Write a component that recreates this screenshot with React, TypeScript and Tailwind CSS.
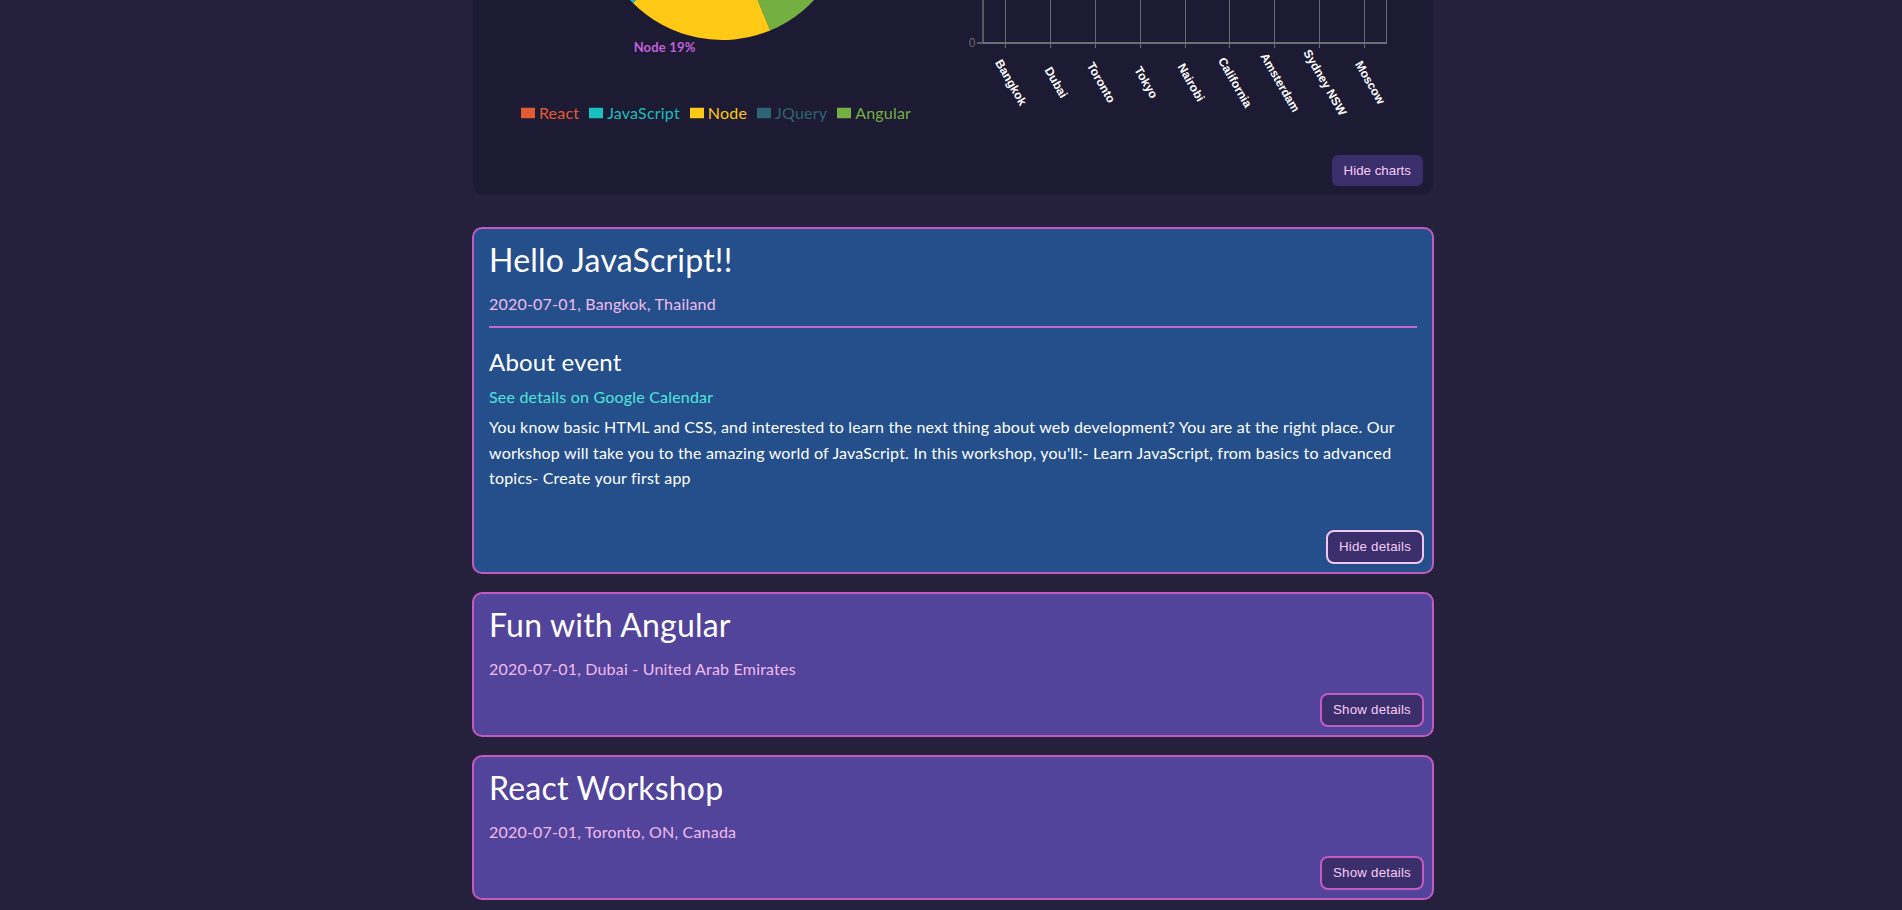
import React, { useState } from "react";

const font = { fontFamily: "Lato, 'Noto Sans', sans-serif", letterSpacing: "0.0125em" };
const btnFont = { fontFamily: "'Liberation Sans', Arial, sans-serif" };

const slices = [
  { name: "Angular", from: 0, to: 67.5, color: "#74b041", pct: 19 },
  { name: "Node", from: 67.5, to: 135, color: "#ffc916", pct: 19 },
  { name: "JavaScript", from: 135, to: 214, color: "#1bbfbf", pct: 22 },
  { name: "React", from: 214, to: 360, color: "#e25a33", pct: 40 },
];

const legend = [
  { name: "React", color: "#e25a33" },
  { name: "JavaScript", color: "#1bbfbf" },
  { name: "Node", color: "#ffc916" },
  { name: "JQuery", color: "#2f6474" },
  { name: "Angular", color: "#74b041" },
];

const cities = [
  "Bangkok",
  "Dubai",
  "Toronto",
  "Tokyo",
  "Nairobi",
  "California",
  "Amsterdam",
  "Sydney NSW",
  "Moscow",
];

const events = [
  {
    title: "Hello JavaScript!!",
    meta: "2020-07-01, Bangkok, Thailand",
    bg: "bg-[#244f8b]",
    open: true,
    text: "You know basic HTML and CSS, and interested to learn the next thing about web development? You are at the right place. Our workshop will take you to the amazing world of JavaScript. In this workshop, you'll:- Learn JavaScript, from basics to advanced topics- Create your first app",
  },
  {
    title: "Fun with Angular",
    meta: "2020-07-01, Dubai - United Arab Emirates",
    bg: "bg-[#52449a]",
    open: false,
    text: "",
  },
  {
    title: "React Workshop",
    meta: "2020-07-01, Toronto, ON, Canada",
    bg: "bg-[#52449a]",
    open: false,
    text: "",
  },
];

const rad = (d: number) => (d * Math.PI) / 180;

function arc(cx: number, cy: number, r: number, a: number, b: number) {
  const x1 = cx + r * Math.cos(rad(a));
  const y1 = cy + r * Math.sin(rad(a));
  const x2 = cx + r * Math.cos(rad(b));
  const y2 = cy + r * Math.sin(rad(b));
  const large = b - a > 180 ? 1 : 0;
  return `M${cx},${cy} L${x1},${y1} A${r},${r} 0 ${large} 1 ${x2},${y2} Z`;
}

function PieChart() {
  const cx = 239;
  const cy = 224;
  const r = 126;
  return (
    <div className="flex flex-col items-center">
      <svg width="478" height="400">
        {slices.map((s) => (
          <path key={s.name} d={arc(cx, cy, r, s.from, s.to)} fill={s.color} />
        ))}
        {slices.map((s) => {
          const mid = (s.from + s.to) / 2;
          const x = cx + (r + 10) * Math.cos(rad(mid));
          const y = cy + (r + 10) * Math.sin(rad(mid));
          return (
            <text
              key={s.name}
              x={x}
              y={y}
              fill="#c262dc"
              fontWeight="700"
              textAnchor={x < cx ? "end" : "start"}
              dominantBaseline="central"
              style={{ ...font, fontSize: "13px" }}
            >
              {s.name} {s.pct}%
            </text>
          );
        })}
      </svg>
      <ul className="mt-[11px] mr-[12px] flex h-6 items-center text-[16px]" style={font}>
        {legend.map((l) => (
          <li key={l.name} className="mr-[10px] flex items-center last:mr-0">
            <svg width="14" height="14" viewBox="0 0 32 32" className="mr-1">
              <path d="M0,4h32v24h-32z" fill={l.color} />
            </svg>
            <span style={{ color: l.color }}>{l.name}</span>
          </li>
        ))}
      </ul>
    </div>
  );
}

function BarChart() {
  const left = 22;
  const right = 425;
  const top = 20;
  const base = 353;
  const band = (right - left) / cities.length;
  const rows = [0, 1, 2, 3, 4];
  return (
    <svg width="462" height="435">
      {rows.map((v) => {
        const y = base - ((base - top) / 4) * v;
        return (
          <g key={v}>
            {v > 0 && <line x1={left} x2={right} y1={y} y2={y} stroke="#5e5c6c" />}
            <line x1={16} x2={left} y1={y} y2={y} stroke="#6e6d78" strokeWidth="1.5" />
            <text
              x={14.5}
              y={y}
              fill="#6b6b6b"
              textAnchor="end"
              dominantBaseline="central"
              style={{ ...btnFont, fontSize: "12px" }}
            >
              {v}
            </text>
          </g>
        );
      })}
      {cities.map((c, i) => {
        const x = Math.round(left + band * (i + 0.5)) + 0.5;
        return (
          <g key={c}>
            <line x1={x} x2={x} y1={top} y2={base + 5} stroke="#6a6876" />
            <text
              x={x + 5.5}
              y={392.5}
              fill="#ffffff"
              fontWeight="700"
              textAnchor="middle"
              dominantBaseline="central"
              transform={`rotate(60 ${x + 5.5} 392.5)`}
              style={{ ...btnFont, fontSize: "12px" }}
            >
              {c}
            </text>
          </g>
        );
      })}
      <line x1={right + 0.5} x2={right + 0.5} y1={top} y2={base} stroke="#6a6876" />
      <line x1={left} x2={left} y1={top} y2={base} stroke="#6e6d78" strokeWidth="1.5" />
      <line x1={left} x2={right + 1} y1={base} y2={base} stroke="#6e6d78" strokeWidth="2" />
    </svg>
  );
}

function EventCard({ ev }: { ev: (typeof events)[number] }) {
  const [open, setOpen] = useState(ev.open);
  return (
    <div
      className={`w-[962px] rounded-[10px] border-2 border-[#c25bc0] ${ev.bg} px-[8px] pt-[11px] pb-[8px]`}
      style={font}
    >
      <div className="px-[7px]">
        <h1 className="text-[32px] leading-[40px] text-white">{ev.title}</h1>
        <p className="mt-[12px] text-[16px] leading-6 text-[#f0bdf0]">{ev.meta}</p>
        {open && (
          <>
            <hr className="mt-[10px] border-t-2 border-[#c466d6]" />
            <h2 className="mt-[18px] text-[24px] leading-8 text-white">About event</h2>
            <a className="mt-[7px] block text-[16px] leading-6 text-[#4fe6dc]" href="#">
              See details on Google Calendar
            </a>
            <p className="mt-[5px] text-[16px] leading-[25.5px] text-white">{ev.text}</p>
          </>
        )}
      </div>
      <div className={`flex justify-end ${open ? "mt-[39px]" : "mt-[12px]"}`}>
        <button
          onClick={() => setOpen(!open)}
          className={`h-[34px] rounded-[8px] border-2 bg-[#3a2e6b] px-[11px] text-[13.33px] text-[#f8cdf8] ${
            open ? "border-[#f2c6f2]" : "border-[#c25bc0]"
          }`}
          style={btnFont}
        >
          {open ? "Hide details" : "Show details"}
        </button>
      </div>
    </div>
  );
}

export default function App() {
  return (
    <div className="min-h-screen overflow-hidden bg-[#25203c] pb-10">
      <div className="flex flex-col items-center pl-[4px]">
        <section className="-mt-[320px] w-[960px] rounded-[10px] bg-[#1d1a33] px-[10px] pt-[10px] pb-[9px]">
          <div className="grid grid-cols-[478px_1fr]">
            <PieChart />
            <BarChart />
          </div>
          <div className="mt-[30px] flex justify-end">
            <button
              className="h-[31px] rounded-[6px] bg-[#3a2e6b] px-[12px] text-[13.33px] text-[#f8cdf8]"
              style={btnFont}
            >
              Hide charts
            </button>
          </div>
        </section>
        <div className="mt-[32px] flex flex-col gap-[18px]">
          {events.map((ev) => (
            <EventCard key={ev.title} ev={ev} />
          ))}
        </div>
      </div>
    </div>
  );
}
